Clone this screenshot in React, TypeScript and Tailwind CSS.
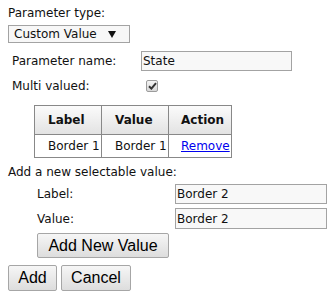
import React from "react";

const font = { fontFamily: '"DejaVu Sans", Verdana, sans-serif' };

function TextInput({ value, width }: { value: string; width: string }) {
  return (
    <input
      readOnly
      value={value}
      className={`h-full ${width} border border-[#a3a3a3] bg-[#f8f8f8] px-[1px] text-[12px] text-[#111] outline-none`}
      style={font}
    />
  );
}

function Btn({ children, className }: { children: React.ReactNode; className: string }) {
  return (
    <button
      className={`rounded-[2px] border border-[#a6a6a6] bg-gradient-to-b from-[#f6f6f6] to-[#dddddd] text-[16px] leading-none text-black ${className}`}
      style={{ fontFamily: '"Liberation Sans", Arial, sans-serif' }}
    >
      {children}
    </button>
  );
}

export default function App() {
  const rows = [{ label: "Border 1", value: "Border 1" }];

  return (
    <div className="h-[305px] w-[333px] bg-white pl-[8px] text-[12px] text-[#111]" style={font}>
      <div className="pt-[5px] leading-[16px]">Parameter type:</div>

      {/* type select */}
      <div className="mt-[4px] flex h-[18px] w-[122px] items-center border border-[#a3a3a3] bg-[#f7f7f7] pl-[5px] text-[12px]">
        <span>Custom Value</span>
        <svg className="ml-[11px]" width="8" height="7" viewBox="0 0 8 7">
          <path d="M0 0 H8 L4 7 Z" fill="#111" />
        </svg>
      </div>

      <div className="mt-[8px] flex h-[20px] items-center">
        <span className="w-[133px] pl-[4px]">Parameter name:</span>
        <TextInput value="State" width="w-[151px]" />
      </div>

      <div className="mt-[7px] flex h-[16px] items-center">
        <span className="w-[138px] pl-[4px]">Multi valued:</span>
        <span className="flex h-[12px] w-[12px] items-center justify-center rounded-[2px] border border-[#9c9c9c] bg-gradient-to-b from-[#f4f4f4] to-[#d8d8d8]">
          <svg width="9" height="8" viewBox="0 0 9 8">
            <path d="M1 4.2 L3.4 6.6 L8 1.2" stroke="#333" strokeWidth="2" fill="none" />
          </svg>
        </span>
      </div>

      {/* values table */}
      <table className="ml-[26px] mt-[11px] border-collapse border border-[#888]">
        <thead>
          <tr className="h-[29px] bg-gradient-to-b from-[#fbfbfb] to-[#e2e2e2]">
            <th className="w-[67px] border border-[#888] pl-[13px] text-left font-bold">Label</th>
            <th className="w-[67px] border border-[#888] pl-[13px] text-left font-bold">Value</th>
            <th className="w-[63px] border border-[#888] pl-[12px] text-left font-bold">Action</th>
          </tr>
        </thead>
        <tbody>
          {rows.map((r) => (
            <tr key={r.label} className="h-[23px]">
              <td className="border border-[#888] pl-[13px] pr-0">{r.label}</td>
              <td className="border border-[#888] pl-[13px] pr-0">{r.value}</td>
              <td className="border border-[#888] pl-[12px] pr-0">
                <a href="#" className="text-[#0000ee] underline">Remove</a>
              </td>
            </tr>
          ))}
        </tbody>
      </table>

      <div className="mt-[6px] leading-[16px]">Add a new selectable value:</div>

      <div className="mt-[4px] flex h-[20px] items-center">
        <span className="w-[167px] pl-[29px]">Label:</span>
        <TextInput value="Border 2" width="w-[152px]" />
      </div>
      <div className="mt-[4px] flex h-[21px] items-center">
        <span className="w-[167px] pl-[29px]">Value:</span>
        <TextInput value="Border 2" width="w-[152px]" />
      </div>

      <Btn className="ml-[29px] mt-[4px] h-[25px] w-[132px]">Add New Value</Btn>

      <div className="mt-[7px] flex gap-[4px]">
        <Btn className="h-[26px] w-[49px]">Add</Btn>
        <Btn className="h-[26px] w-[70px]">Cancel</Btn>
      </div>
    </div>
  );
}
